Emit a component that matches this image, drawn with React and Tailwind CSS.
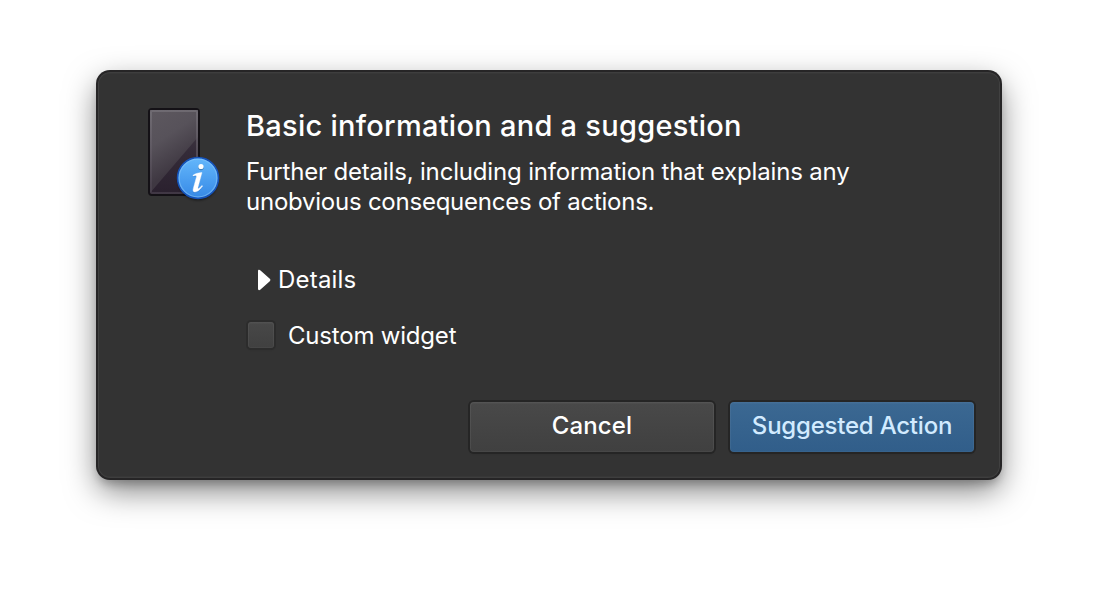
function DeviceInfoIcon() {
  return (
    <svg className="block shrink-0" width="96" height="116" viewBox="0 0 96 116" aria-hidden="true">
      <defs>
        <linearGradient id="screen" x1="0" y1="0" x2="0" y2="1">
          <stop offset="0" stopColor="#47414a" />
          <stop offset="0.5" stopColor="#342b38" />
          <stop offset="1" stopColor="#2a202e" />
        </linearGradient>
        <linearGradient id="glare" gradientUnits="userSpaceOnUse" x1="14" y1="20" x2="46" y2="68">
          <stop offset="0" stopColor="#5c575e" />
          <stop offset="0.45" stopColor="#57525a" />
          <stop offset="1" stopColor="#3f3842" />
        </linearGradient>
        <linearGradient id="badge" x1="0" y1="0" x2="0" y2="1">
          <stop offset="0" stopColor="#64b7fb" />
          <stop offset="1" stopColor="#3689e6" />
        </linearGradient>
        <linearGradient id="edge" x1="0" y1="0" x2="0" y2="1">
          <stop offset="0" stopColor="#77737a" />
          <stop offset="1" stopColor="#4a414e" />
        </linearGradient>
        <filter id="soft" x="-30%" y="-30%" width="160%" height="160%">
          <feGaussianBlur stdDeviation="1" />
        </filter>
      </defs>
      <rect x="13" y="13" width="50" height="86" rx="3" fill="url(#screen)" stroke="#141116" strokeWidth="2" />
      <path d="M14 14H62V41L14 97Z" fill="url(#glare)" />
      <rect x="15" y="15" width="46" height="82" rx="1" fill="none" stroke="url(#edge)" strokeWidth="2" strokeOpacity="0.7" />
      <ellipse cx="62" cy="84.5" rx="20" ry="20" fill="#000" opacity="0.45" filter="url(#soft)" />
      <circle cx="62" cy="82" r="20.4" fill="url(#badge)" stroke="#1552b8" strokeWidth="1.7" />
      <circle cx="62" cy="82" r="18.9" fill="none" stroke="#8dcafa" strokeWidth="1.3" strokeOpacity="0.5" />
      <circle cx="65" cy="71.5" r="2.7" opacity="0.25" />
      <circle cx="65" cy="70.5" r="2.6" fill="#fff" />
      <path d="M57 79.2C59.5 77.4 62.8 76.7 66 76.6L62 91.2C61.6 92.8 62.2 93 63.3 92.1C64.3 91.3 65.1 90.4 65.9 89.4L66.6 90C64.2 93.9 61.2 96 58.9 96C57.1 96 56.7 94.6 57.3 92.4L60.4 81.3C60.8 79.9 60.3 79.3 59.2 79.4L57 80Z" fill="#1b5fb5" opacity="0.4" transform="translate(0 1)" />
      <path d="M57 79.2C59.5 77.4 62.8 76.7 66 76.6L62 91.2C61.6 92.8 62.2 93 63.3 92.1C64.3 91.3 65.1 90.4 65.9 89.4L66.6 90C64.2 93.9 61.2 96 58.9 96C57.1 96 56.7 94.6 57.3 92.4L60.4 81.3C60.8 79.9 60.3 79.3 59.2 79.4L57 80Z" fill="#fff" stroke="#fff" strokeWidth="0.4" />
    </svg>
  );
}

export default function App() {
  return (
    <main className="flex h-[602px] w-[1098px] items-start justify-center overflow-hidden bg-white pt-[72px] font-['Inter',sans-serif] text-white">
      <section
        role="dialog"
        aria-labelledby="title"
        className="flex h-[406px] w-[902px] flex-col rounded-[12px] bg-[#333333] shadow-[inset_0_-1px_0_1px_rgba(255,255,255,0.02),inset_0_0_0_1px_rgba(255,255,255,0.04),inset_0_1px_0_1px_rgba(255,255,255,0.02),0_0_0_2px_#262526,0_6px_8px_rgba(0,0,0,0.2),0_12px_32px_rgba(0,0,0,0.52)]"
      >
        <div className="flex h-[330px] pl-[38px] pt-6">
          <DeviceInfoIcon />
          <div className="flex flex-col items-start pl-[14px] pt-3 text-2xl leading-[30px] whitespace-nowrap">
            <h1 id="title" className="text-[29px] leading-9 font-medium tracking-[0.27px]">Basic information and a suggestion</h1>
            <p className="mt-[13px] tracking-[-0.17px]">
              Further details, including information that explains any<br />
              <span className="tracking-[-0.24px]">unobvious consequences of actions.</span>
            </p>
            <button className="mt-12 ml-3 flex items-center tracking-[0.2px]">
              <svg className="mr-[7px]" width="13" height="22" viewBox="0 0 13 22" aria-hidden="true">
                <path d="M0 2.2C0 .6 1.4.4 2.5 1.6L11.8 9.8C12.6 10.5 12.6 11.5 11.8 12.2L2.5 20.4C1.4 21.6 0 21.4 0 19.8Z" fill="#fff" />
              </svg>
              Details
            </button>
            <label className="mt-[26px] ml-0.5 flex items-center tracking-[-0.2px]">
              <input
                type="checkbox"
                className="mr-[14px] mb-0.5 size-[26px] appearance-none rounded-[3px] bg-linear-to-b from-[#484848] to-[#404040] shadow-[inset_0_1px_0_1px_rgba(255,255,255,0.025),inset_0_0_0_1px_rgba(255,255,255,0.03),0_0_0_2px_#2c2c2c,0_2px_2px_rgba(0,0,0,0.12)]"
              />
              Custom widget
            </label>
          </div>
        </div>
        <div className="flex justify-end gap-4 pr-[26px] text-2xl leading-[30px] font-medium">
          <button className="h-[50px] w-[244px] rounded-[4px] bg-linear-to-b from-[#494949] to-[#404040] pb-0.5 tracking-[0.1px] shadow-[inset_0_1px_0_1px_rgba(255,255,255,0.025),inset_0_0_0_1px_rgba(255,255,255,0.04),0_0_0_2px_#252525,0_2px_2px_rgba(0,0,0,0.15)]">
            Cancel
          </button>
          <button className="h-[50px] w-[244px] rounded-[4px] bg-linear-to-b from-[#3b6892] to-[#315e8a] pb-0.5 tracking-[-0.22px] text-[#d2ebff] shadow-[inset_0_1px_0_1px_rgba(255,255,255,0.025),inset_0_0_0_1px_rgba(255,255,255,0.03),0_0_0_2px_#252525,0_2px_2px_rgba(0,0,0,0.15)]">
            Suggested Action
          </button>
        </div>
      </section>
    </main>
  );
}
